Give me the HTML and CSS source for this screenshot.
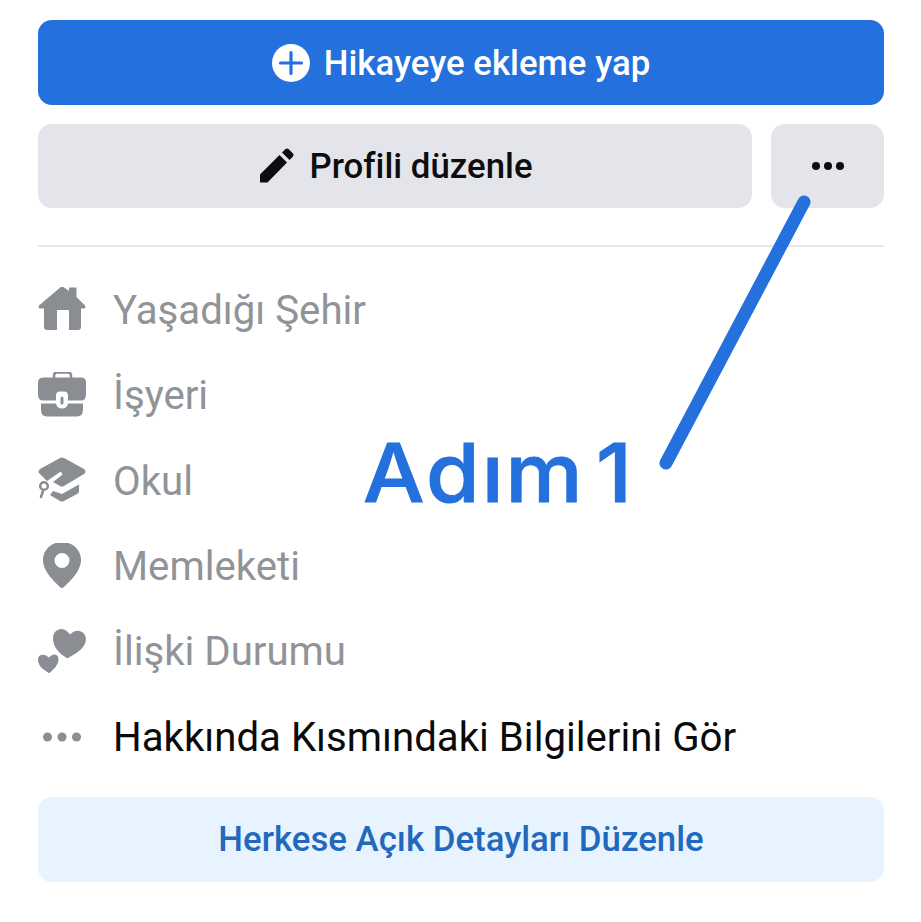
FILE: index.html
```html
<!DOCTYPE html>
<html lang="tr">
<head>
    <meta charset="UTF-8">
    <meta name="viewport" content="width=device-width, initial-scale=1.0">
    <title>Profil</title>
    <link rel="stylesheet" href="styles.css">
</head>
<body>
    <div class="container">
        <button class="btn btn-primary">
            <svg class="btn-icon" width="38" height="38" viewBox="0 0 38 38"><circle cx="19" cy="19" r="19" fill="#fff"/><path d="M8.500 19h21M19 8.500v21" stroke="#2470dc" stroke-width="3.200" stroke-linecap="round"/></svg>
            Hikayeye ekleme yap
        </button>
        <div class="btn-row">
            <button class="btn btn-grey btn-grow">
                <svg class="btn-icon btn-icon-edit" width="36" height="36" viewBox="0 0 36 36"><path d="M1 35.500V27.500L20.500 8 28 15.500 8.500 35.500ZM23 5.500 26.500 2Q28 .8 29.500 2L34 6.500Q35.200 8 34 9.500L30.500 13Z" fill="#0d0d0f"/></svg>
                Profili düzenle
            </button>
            <button class="btn btn-grey btn-more">
                <svg width="36" height="10" viewBox="0 0 36 10"><circle cx="6" cy="5" r="4" fill="#0d0d0f"/><circle cx="18" cy="5" r="4" fill="#0d0d0f"/><circle cx="30" cy="5" r="4" fill="#0d0d0f"/></svg>
            </button>
        </div>
        <hr class="divider">
        <ul class="info">
            <li class="info-row">
                <svg class="info-icon" width="48" height="48" viewBox="0 1 48 48"><path d="M24 0 31 5V1.500H38.500V11L47 19.500Q48.500 22.500 45.500 22.500H43V41Q43 44 40 44H31V24H19V44H9Q6 44 6 41V22.500H2.500Q-.5 22.500 1 19.500Z" fill="#8a8d91"/></svg>
                Yaşadığı Şehir
            </li>
            <li class="info-row">
                <svg class="info-icon" width="48" height="48" viewBox="0 1.500 48 48"><path d="M16 8V5Q16 2 19 2H30Q33 2 33 5V8" fill="none" stroke="#8a8d91" stroke-width="2.500"/><path d="M6 7H43Q48 7 48 12V24Q48 30 43 30H30V25Q30 21 26 21H22Q18 21 18 25V30H5Q0 30 0 24V12Q0 7 6 7Z" fill="#8a8d91"/><path d="M3 33H18Q19 38 24 38T30 33H45V39Q45 46 39 46H9Q3 46 3 39Z" fill="#8a8d91"/><rect x="22.500" y="26" width="3" height="8" rx="1.500" fill="#8a8d91"/></svg>
                İşyeri
            </li>
            <li class="info-row">
                <svg class="info-icon" width="48" height="48" viewBox="0 0 48 48"><path d="M22 1Q24 0 26 1L46 12Q49 15 46 17L26 29Q24 30 22 29L15 25 24 18Q25 15 22 15L9 24 2 17Q-1 15 2 12Z" fill="#8a8d91"/><path d="M15 34 24 37 40 28Q42 27 41 30V34Q41 36 39 37L26 44Q24 45 22 44L12 38Z" fill="#8a8d91"/><circle cx="6" cy="29" r="3.800" fill="none" stroke="#8a8d91" stroke-width="2.500"/><path d="M5 34 3 40" stroke="#8a8d91" stroke-width="2.500" stroke-linecap="round"/></svg>
                Okul
            </li>
            <li class="info-row">
                <svg class="info-icon" width="48" height="48" viewBox="0 2 48 48"><path fill-rule="evenodd" d="M24 1C34.500 1 43 9 43 19 43 31 30 42 26 46Q24 48 22 46C18 42 5 31 5 19 5 9 13.500 1 24 1ZM24 12A7.500 7.500 0 1 0 24 27 7.500 7.500 0 1 0 24 12Z" fill="#8a8d91"/></svg>
                Memleketi
            </li>
            <li class="info-row">
                <svg class="info-icon" width="48" height="48" viewBox="0 1.500 48 48"><path d="M28 31C21 27 15 20 15 12 15 5 21 1 26 3 29 4 31 7 32 8 35 5 39 3 43 5 48 7 49 13 47 17 44 24 36 28 31 31Q29 32 28 31Z" fill="#8a8d91"/><path d="M10 46C5 43 0 39 0 33 0 29 4 27 8 29L11 31C14 28 17 27 19 29 21 31 21 35 19 38 17 42 14 44 12 46Q11 47 10 46Z" fill="#8a8d91"/></svg>
                İlişki Durumu
            </li>
            <li class="info-row info-row-dark">
                <svg class="info-icon" width="48" height="48" viewBox="0 0 48 48"><circle cx="9.500" cy="24" r="4.500" fill="#8a8d91"/><circle cx="24" cy="24" r="4.500" fill="#8a8d91"/><circle cx="38.500" cy="24" r="4.500" fill="#8a8d91"/></svg>
                Hakkında Kısmındaki Bilgilerini Gör
            </li>
        </ul>
        <button class="btn btn-light">Herkese Açık Detayları Düzenle</button>
    </div>

    <svg class="arrow" width="921" height="922" viewBox="0 0 921 922"><line x1="804" y1="202" x2="666" y2="463" stroke="#2470dc" stroke-width="13" stroke-linecap="round"/></svg>
    <div class="step-label">Adım 1</div>
</body>
</html>
```

FILE: styles.css
```css
body {
    font-family: Roboto, "Liberation Sans", sans-serif;
    background-color: #fff;
    margin: 0;
    color: #000;
}
.container {
    padding: 20px 37px 40px 38px;
}
.btn {
    display: flex;
    justify-content: center;
    align-items: center;
    width: 100%;
    height: 85px;
    border: none;
    border-radius: 14px;
    font-family: inherit;
    font-size: 34.8px;
    font-weight: 500;
    padding: 0;
}
.btn-icon {
    margin-right: 14px;
}
.btn-icon-edit {
    margin-left: 2px;
    margin-bottom: 3px;
}
.btn-primary {
    background-color: #2470dc;
    color: #fff;
}
.btn-row {
    display: flex;
    gap: 19px;
    margin-top: 19px;
}
.btn-grey {
    background-color: #e4e5ea;
    color: #0d0d0f;
    height: 84px;
}
.btn-grow {
    flex: 1;
}
.btn-more {
    width: 113px;
}
.divider {
    border: none;
    height: 2px;
    background-color: #e8e8ea;
    margin: 37px 0 21px;
}
.info {
    list-style: none;
    margin: 0 0 17px;
    padding: 0;
}
.info-row {
    display: flex;
    align-items: center;
    height: 85.3px;
    font-size: 40.2px;
    color: #909397;
}
.info-row-dark {
    color: #0a0a0a;
}
.info-icon {
    margin-right: 27px;
    flex-shrink: 0;
}
.btn-light {
    background-color: #e7f3ff;
    color: #2268bd;
}
.arrow {
    position: absolute;
    left: 0;
    top: 0;
}
.step-label {
    position: absolute;
    left: 363px;
    top: 425px;
    font-family: Inter, sans-serif;
    font-size: 81px;
    font-weight: 500;
    letter-spacing: 2px;
    word-spacing: -13px;
    line-height: 96px;
    color: #2470dc;
    -webkit-text-stroke: 1px #2470dc;
    transform: scaleX(1.07);
    transform-origin: left center;
}
```
